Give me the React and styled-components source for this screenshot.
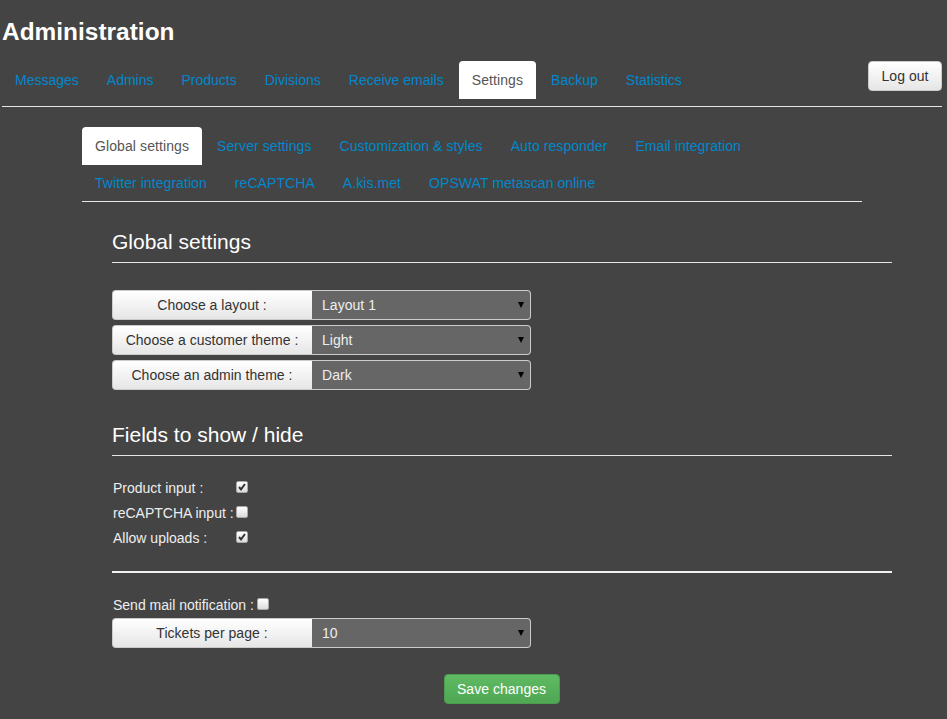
import React from "react";
import styled, { createGlobalStyle } from "styled-components";

const GlobalStyle = createGlobalStyle`
  html, body {
    margin: 0;
    background: #444444;
    color: #eeeeee;
    font-family: "Liberation Sans", Arial, sans-serif;
    font-size: 14px;
    line-height: 20px;
    letter-spacing: 0.03px;
  }
  * {
    box-sizing: border-box;
  }
`;

const Page = styled.div`
  position: relative;
  padding: 18px 5px 0 2px;
  height: 719px;
  overflow: hidden;
`;

const Title = styled.h1`
  margin: 0;
  font-size: 24.4px;
  line-height: 28px;
  font-weight: bold;
  color: #ffffff;
`;

const TabBar = styled.ul`
  display: flex;
  flex-wrap: wrap;
  list-style: none;
  margin: ${(p) => (p.$sub ? "20px 0 0 80px" : "15px 0 0")};
  padding: 0 0 ${(p) => (p.$sub ? "0" : "8px")};
  width: ${(p) => (p.$sub ? "780px" : "auto")};
  border-bottom: 1px solid #e6e6e6;
`;

const TabItem = styled.li`
  margin: 0 2px -1px 0;
  padding: 9px 13px;
  height: 38px;
  line-height: 20px;
  letter-spacing: ${(p) => (p.$active ? "0.1px" : p.$spacing)};
  color: ${(p) => (p.$active ? "#555555" : "#0088cc")};
  background: ${(p) => (p.$active ? "#ffffff" : "transparent")};
  border-radius: 4px 4px 0 0;
  white-space: nowrap;
`;

const LogoutButton = styled.button`
  position: absolute;
  top: 61px;
  right: 5px;
  width: 74px;
  height: 30px;
  padding: 0;
  font: inherit;
  letter-spacing: inherit;
  color: #333333;
  background: linear-gradient(#ffffff, #e6e6e6);
  border: 1px solid #cccccc;
  border-radius: 4px;
`;

const Content = styled.form`
  margin: 0 0 0 110px;
  width: 780px;
`;

const SectionTitle = styled.h3`
  margin: ${(p) => p.$top} 0 0;
  padding-bottom: 9px;
  font-size: 21px;
  line-height: 22px;
  font-weight: 500;
  letter-spacing: 0;
  color: #ffffff;
  border-bottom: 1px solid #e6e6e6;
`;

const Groups = styled.div`
  display: flex;
  flex-direction: column;
  gap: 5px;
  margin-top: ${(p) => p.$top};
`;

const Group = styled.div`
  display: flex;
  width: 419px;
  height: 30px;
`;

const Addon = styled.span`
  flex: 0 0 200px;
  padding-right: 1px;
  text-align: center;
  line-height: 28px;
  color: #333333;
  background: linear-gradient(#ffffff, #e6e6e6);
  border: 1px solid #cccccc;
  border-right: 0;
  border-radius: 4px 0 0 4px;
`;

const SelectBox = styled.div`
  position: relative;
  flex: 1;
  &::after {
    content: "";
    position: absolute;
    right: 7px;
    top: 12px;
    border-left: 3px solid transparent;
    border-right: 3px solid transparent;
    border-top: 6px solid #000000;
  }
`;

const Select = styled.select`
  appearance: none;
  display: block;
  width: 100%;
  height: 30px;
  padding: 0 10px;
  font: inherit;
  letter-spacing: inherit;
  color: #eeeeee;
  background: #666666;
  border: 1px solid #cccccc;
  border-left: 0;
  border-radius: 0 4px 4px 0;
  outline: 0;
`;

const Checks = styled.div`
  margin-top: ${(p) => p.$top};
`;

const CheckRow = styled.label`
  display: flex;
  align-items: center;
  height: 25px;
  margin-left: 1px;
  letter-spacing: 0;
  color: #eeeeee;
`;

const CheckLabel = styled.span`
  flex: 0 0 ${(p) => p.$width};
`;

const CheckBox = styled.span`
  display: block;
  width: 12px;
  height: 12px;
  margin-top: -2px;
  background: linear-gradient(#ffffff, #dcdcdc);
  border: 1px solid #a8a8a8;
  border-radius: 2px;
  svg {
    display: block;
  }
`;

const Divider = styled.hr`
  margin: 21px 0 0;
  border: 0;
  height: 2px;
  background: #f2f2f2;
`;

const Actions = styled.div`
  display: flex;
  justify-content: center;
  margin: 26px 0 0 -1px;
`;

const SaveButton = styled.button`
  width: 116px;
  height: 30px;
  padding: 0;
  font: inherit;
  letter-spacing: inherit;
  color: #ffffff;
  background: linear-gradient(#5fbb63, #4fa653);
  border: 1px solid #4a9d4e;
  border-radius: 4px;
`;

const Check = ({ checked }) => (
  <CheckBox>
    {checked && (
      <svg width="10" height="10" viewBox="0 0 10 10">
        <path d="M2 5l2 2.4L8 2" fill="none" stroke="#333333" strokeWidth="2" />
      </svg>
    )}
  </CheckBox>
);

const mainTabs = [
  "Messages",
  "Admins",
  "Products",
  "Divisions",
  "Receive emails",
  "Settings",
  "Backup",
  "Statistics",
];

const subTabs = [
  "Global settings",
  "Server settings",
  "Customization & styles",
  "Auto responder",
  "Email integration",
  "Twitter integration",
  "reCAPTCHA",
  "A.kis.met",
  "OPSWAT metascan online",
];

const SelectGroup = ({ label, value }) => (
  <Group>
    <Addon>{label}</Addon>
    <SelectBox>
      <Select defaultValue={value}>
        <option>{value}</option>
      </Select>
    </SelectBox>
  </Group>
);

export default function App() {
  return (
    <Page>
      <GlobalStyle />
      <Title>Administration</Title>
      <TabBar>
        {mainTabs.map((t) => (
          <TabItem key={t} $spacing="0" $active={t === "Settings"}>
            {t}
          </TabItem>
        ))}
      </TabBar>
      <LogoutButton type="button">Log out</LogoutButton>
      <TabBar $sub>
        {subTabs.map((t) => (
          <TabItem key={t} $spacing="0.07px" $active={t === "Global settings"}>
            {t}
          </TabItem>
        ))}
      </TabBar>
      <Content>
        <SectionTitle $top="29px">Global settings</SectionTitle>
        <Groups $top="27px">
          <SelectGroup label="Choose a layout :" value="Layout 1" />
          <SelectGroup label="Choose a customer theme :" value="Light" />
          <SelectGroup label="Choose an admin theme :" value="Dark" />
        </Groups>
        <SectionTitle $top="34px">Fields to show / hide</SectionTitle>
        <Checks $top="19px">
          <CheckRow>
            <CheckLabel $width="123px">Product input :</CheckLabel>
            <Check checked />
          </CheckRow>
          <CheckRow>
            <CheckLabel $width="123px">reCAPTCHA input :</CheckLabel>
            <Check />
          </CheckRow>
          <CheckRow>
            <CheckLabel $width="123px">Allow uploads :</CheckLabel>
            <Check checked />
          </CheckRow>
        </Checks>
        <Divider />
        <Checks $top="19px">
          <CheckRow>
            <CheckLabel $width="144px">Send mail notification :</CheckLabel>
            <Check />
          </CheckRow>
        </Checks>
        <Groups $top="1px">
          <SelectGroup label="Tickets per page :" value="10" />
        </Groups>
        <Actions>
          <SaveButton type="button">Save changes</SaveButton>
        </Actions>
      </Content>
    </Page>
  );
}
